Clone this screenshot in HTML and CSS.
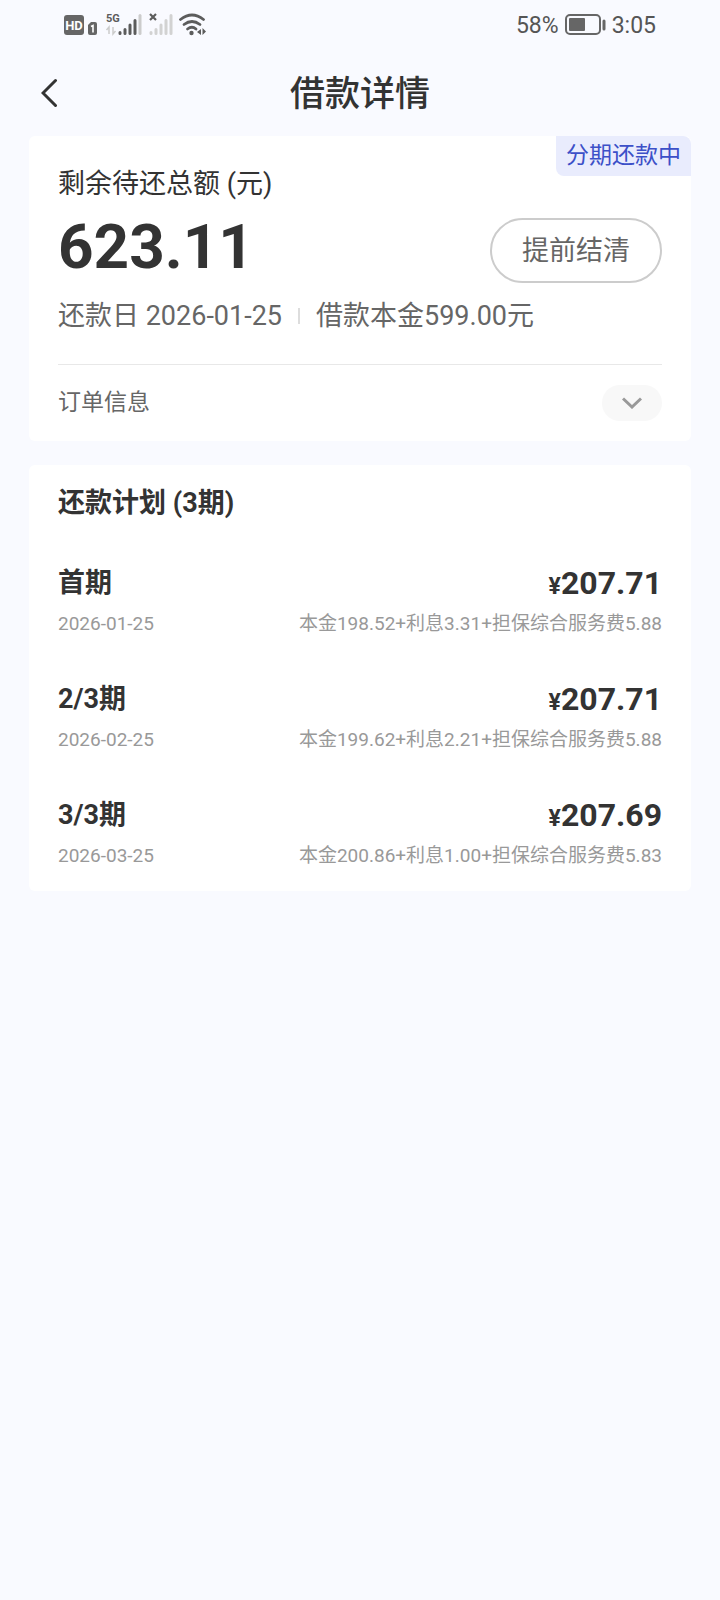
FILE: index.html
```html
<!DOCTYPE html>
<html lang="zh-CN">
<head>
  <meta charset="UTF-8" />
  <meta name="viewport" content="width=device-width, initial-scale=1.0" />
  <title>借款详情</title>
  <link rel="stylesheet" href="styles.css">
</head>
<body>
  <div class="status-bar">
    <svg class="status-icons" width="144" height="26" viewBox="0 0 144 26" aria-hidden="true">
      <!-- HD + sim -->
      <rect x="0" y="3" width="20" height="20" rx="3" fill="#666" />
      <text x="10" y="18" text-anchor="middle" class="hd-text">HD</text>
      <path d="M24 13l3-3h4q2 0 2 2v9q0 2-2 2h-5q-2 0-2-2z" fill="#666" />
      <path d="M27 14.500l2-1v7" fill="none" stroke="#fff" stroke-width="1.600" />
      <!-- 5G signal -->
      <text x="42" y="10" class="net-text">5G</text>
      <path d="M45 22v-7l-2.500 3M49 15v7l2.500-3" fill="none" stroke="#ccc" stroke-width="1.500" />
      <g stroke-width="3" stroke-linecap="round" fill="none">
        <path d="M56 20.500v1M61 17.500v4M66 13v8.500M71 8.500v13" stroke="#5c5c5c" />
        <path d="M76 3.500v18" stroke="#ccc" />
        <path d="M87 20.500v1M92 17.500v4M97 13v8.500M102 8.500v13M107 3.500v18" stroke="#d2d2d2" />
      </g>
      <path d="M86 2l6 6M92 2l-6 6" stroke="#5c5c5c" stroke-width="2.200" />
      <!-- wifi -->
      <g fill="none" stroke="#5c5c5c" stroke-width="2.800" stroke-linecap="round">
        <path d="M116.500 7.500q11.500-9 23 0" />
        <path d="M120 12.500q8-6 16 0" />
        <path d="M123.500 17q4.500-3.500 8.500 0" />
      </g>
      <circle cx="127.500" cy="21" r="2.200" fill="#5c5c5c" />
      <path d="M133 20l4-3v6zM138.500 16v7l3.500-3.500z" fill="#5c5c5c" />
    </svg>
    <div class="status-right">
      <span>58%</span>
      <svg width="41" height="22" viewBox="0 0 41 22" aria-hidden="true">
        <rect x="1" y="1" width="34" height="19" rx="4" fill="none" stroke="#666" stroke-width="2" />
        <rect x="4" y="4" width="16" height="13" rx="1" fill="#666" />
        <path d="M39 7v8" stroke="#666" stroke-width="3" stroke-linecap="round" />
      </svg>
      <span>3:05</span>
    </div>
  </div>

  <header class="nav-bar">
    <button class="back-btn" type="button" aria-label="返回">
      <svg width="18" height="30" viewBox="0 0 18 30"><path d="M14.500 2.500L2 15l12.500 12.500" /></svg>
    </button>
    <h1>借款详情</h1>
  </header>

  <main class="content">
    <section class="card summary">
      <span class="badge">分期还款中</span>
      <div class="summary-top">
        <div>
          <p class="label">剩余待还总额 (元)</p>
          <p class="total">623.11</p>
        </div>
        <button class="settle-btn" type="button">提前结清</button>
      </div>
      <p class="meta">
        <span>还款日 2026-01-25</span>
        <span class="meta-line"></span>
        <span>借款本金599.00元</span>
      </p>
      <div class="order-info">
        <span>订单信息</span>
        <button class="toggle-btn" type="button" aria-label="展开订单信息">
          <svg width="20" height="12" viewBox="0 0 20 12"><path d="M1 1.500l9 8.500 9-8.500" /></svg>
        </button>
      </div>
    </section>

    <section class="card plan">
      <h2>还款计划 (3期)</h2>
      <ul class="plan-list">
        <li>
          <div class="plan-row">
            <h3>首期</h3>
            <span class="price"><span class="yen">¥</span>207.71</span>
          </div>
          <div class="plan-detail">
            <span>2026-01-25</span>
            <span>本金198.52+利息3.31+担保综合服务费5.88</span>
          </div>
        </li>
        <li>
          <div class="plan-row">
            <h3>2/3期</h3>
            <span class="price"><span class="yen">¥</span>207.71</span>
          </div>
          <div class="plan-detail">
            <span>2026-02-25</span>
            <span>本金199.62+利息2.21+担保综合服务费5.88</span>
          </div>
        </li>
        <li>
          <div class="plan-row">
            <h3>3/3期</h3>
            <span class="price"><span class="yen">¥</span>207.69</span>
          </div>
          <div class="plan-detail">
            <span>2026-03-25</span>
            <span>本金200.86+利息1.00+担保综合服务费5.83</span>
          </div>
        </li>
      </ul>
    </section>
  </main>
</body>
</html>
```
FILE: styles.css
```css
* {
  box-sizing: border-box;
  margin: 0;
  padding: 0;
}
body {
  font-family: Roboto, 'Noto Sans CJK SC', sans-serif;
  background: #f9faff;
  color: #333;
  min-height: 100vh;
}
button {
  font-family: inherit;
  cursor: pointer;
}
.status-bar {
  display: flex;
  justify-content: space-between;
  align-items: center;
  height: 50px;
  padding: 0 64px;
}
.hd-text {
  font-size: 13px;
  font-weight: 700;
  fill: #fff;
}
.net-text {
  font-size: 11px;
  font-weight: 700;
  fill: #5c5c5c;
}
.status-right {
  display: flex;
  align-items: center;
  gap: 6px;
  font-size: 23px;
  color: #555;
}
.nav-bar {
  display: grid;
  grid-template-columns: 60px 1fr 60px;
  align-items: center;
  height: 86px;
  padding: 4px 29px 0;
}
.nav-bar h1 {
  font-size: 35px;
  font-weight: 500;
  line-height: 52px;
  text-align: center;
}
.back-btn {
  display: flex;
  padding: 8px 12px 12px;
  background: none;
  border: none;
}
.back-btn svg {
  fill: none;
  stroke: #333;
  stroke-width: 3;
  stroke-linecap: round;
}
.content {
  display: flex;
  flex-direction: column;
  gap: 24px;
  padding: 0 29px;
}
.card {
  position: relative;
  background: #fff;
  border-radius: 6px;
  padding: 0 29px;
}
.summary {
  padding-top: 30px;
}
.badge {
  position: absolute;
  top: 0;
  right: 0;
  padding: 0 10px;
  font-size: 23px;
  line-height: 40px;
  color: #3c50c8;
  background: #e9ecfd;
  border-radius: 0 8px 0 8px;
}
.summary-top {
  display: flex;
  justify-content: space-between;
  align-items: flex-end;
}
.label {
  font-size: 27px;
  line-height: 36px;
}
.total {
  margin-top: 9px;
  font-size: 62px;
  font-weight: 700;
  line-height: 72px;
}
.settle-btn {
  height: 65px;
  padding: 0 30px 4px;
  font-size: 27px;
  color: #666;
  background: #fff;
  border: 2px solid #ccc;
  border-radius: 33px;
}
.meta {
  display: flex;
  align-items: center;
  gap: 16px;
  margin-top: 15px;
  font-size: 27px;
  line-height: 36px;
  color: #666;
}
.meta-line {
  width: 2px;
  height: 16px;
  background: #ddd;
}
.order-info {
  display: flex;
  justify-content: space-between;
  align-items: center;
  margin-top: 30px;
  padding: 20px 0;
  border-top: 1px solid #e8e8e8;
  font-size: 23px;
  line-height: 36px;
  color: #666;
}
.toggle-btn {
  display: flex;
  justify-content: center;
  align-items: center;
  width: 60px;
  height: 36px;
  background: #f8f8f8;
  border: none;
  border-radius: 18px;
}
.toggle-btn svg {
  fill: none;
  stroke: #999;
  stroke-width: 3;
}
.plan {
  padding-top: 20px;
  padding-bottom: 21px;
}
.plan h2,
.plan h3 {
  font-size: 27px;
  font-weight: 700;
  line-height: 36px;
}
.plan-list {
  display: flex;
  flex-direction: column;
  gap: 43px;
  margin-top: 44px;
  list-style: none;
}
.plan-row,
.plan-detail {
  display: flex;
  justify-content: space-between;
}
.price {
  display: flex;
  align-items: baseline;
  font-size: 32px;
  font-weight: 700;
  line-height: 36px;
}
.yen {
  font-size: 23px;
  line-height: 24px;
}
.plan-detail {
  margin-top: 9px;
  font-size: 19px;
  line-height: 28px;
  color: #999;
}
```
